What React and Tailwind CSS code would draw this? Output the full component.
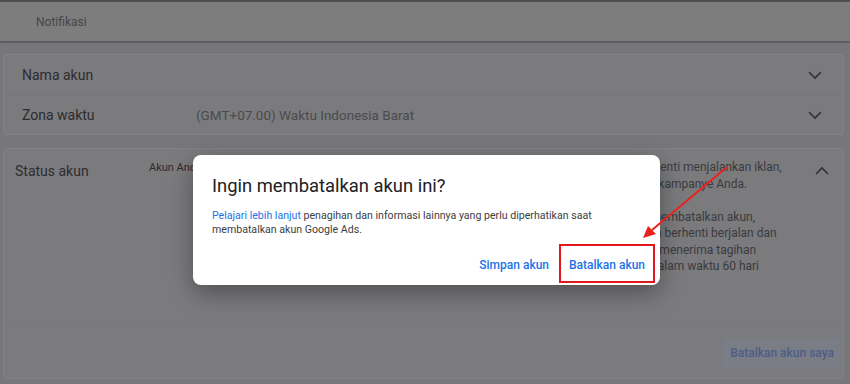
import { useState } from "react";

function Chevron({ up = false }) {
  return (
    <svg width="14" height="9" viewBox="0 0 14 9" className="shrink-0">
      <polyline
        points={up ? "1,8 7,2 13,8" : "1,1 7,7 13,1"}
        fill="none"
        stroke="#333336"
        strokeWidth="1.6"
      />
    </svg>
  );
}

const rightLines = [
  "Anda akan berhenti menjalankan iklan,",
  "termasuk iklan kampanye Anda.",
  "",
  "Setelah Anda membatalkan akun,",
  "iklan Anda akan berhenti berjalan dan",
  "dan Anda akan menerima tagihan",
  "terakhir Anda dalam waktu 60 hari",
];

export default function App() {
  const [open] = useState(true);

  return (
    <div className="relative h-[384px] w-[850px] overflow-hidden bg-[#77777a] font-['Roboto',sans-serif]">
      {/* top tab bar */}
      <div className="flex h-[43px] items-center border-t-2 border-b-2 border-t-[#4f4f50] border-b-[#5e5e60] bg-[#7d7d7e] pl-[36px]">
        <span className="text-[12px] text-[#464648]">Notifikasi</span>
      </div>

      {/* account name / time zone */}
      <div className="mt-[11px] ml-[3px] mr-[6px] rounded-[3px] border border-[#828285] bg-[#7b7b7e]">
        <div className="flex h-[40px] items-center pl-[18px] pr-[21px]">
          <span className="text-[14px] text-[#2c2c2f]">Nama akun</span>
          <span className="flex-1" />
          <Chevron />
        </div>
        <div className="flex h-[39px] items-center border-t border-[#77777a] pl-[18px] pr-[21px]">
          <span className="w-[174px] text-[14px] text-[#2c2c2f]">Zona waktu</span>
          <span className="text-[13.5px] text-[#4a4a4d]">
            (GMT+07.00) Waktu Indonesia Barat
          </span>
          <span className="flex-1" />
          <Chevron />
        </div>
      </div>

      {/* status card */}
      <div className="mt-[13px] ml-[3px] mr-[6px] rounded-[3px] border border-[#828285] bg-[#7b7b7e]">
        <div className="flex h-[174px]">
          <div className="w-[145px] pl-[11px] pt-[12px] text-[14px] text-[#2c2c2f]">
            Status akun
          </div>
          <div className="w-[428px] pt-[11px] text-[11px] text-[#2c2c2f]">
            Akun Anda aktif
          </div>
          <div className="w-[215px] whitespace-nowrap pt-[10px] text-[12px] leading-[16.5px] text-[#3a3a3d]">
            {rightLines.map((l, i) => (
              <div key={i} className="h-[16.5px]">
                {l}
              </div>
            ))}
          </div>
          <div className="flex flex-1 justify-end pr-[14px] pt-[17px]">
            <Chevron up />
          </div>
        </div>
        <div className="flex h-[55px] items-start justify-end border-t border-[#77777a] pt-[14px] pr-[1px]">
          <button className="h-[30px] rounded-[4px] bg-[#7a7d86] px-[8px] text-[12px] font-medium text-[#4c5d86]">
            Batalkan akun saya
          </button>
        </div>
      </div>

      {/* dialog */}
      {open && (
        <div className="absolute inset-0 flex justify-center pt-[155px] pl-[3px]">
          <div className="h-[130px] w-[467px] rounded-[8px] bg-white shadow-[0_8px_24px_rgba(0,0,0,0.35)]">
            <h2 className="pl-[19px] pt-[19px] text-[18.4px] leading-[24px] font-normal text-[#202124]">
              Ingin membatalkan akun ini?
            </h2>
            <p className="mt-[11px] pl-[19px] pr-[40px] text-[10.6px] leading-[14px] text-[#3c4043]">
              <a className="text-[#1a73e8]">Pelajari lebih lanjut</a> penagihan dan
              informasi lainnya yang perlu diperhatikan saat membatalkan akun
              Google Ads.
            </p>
            <div className="mt-[9px] flex justify-end gap-[4px] pr-[7px]">
              <button className="h-[35px] px-[8px] pt-[3px] text-[12px] font-medium text-[#1a73e8]">
                Simpan akun
              </button>
              <button className="h-[35px] w-[92px] pt-[3px] text-[12px] font-medium text-[#1a73e8] outline-2 outline-[#e2171d] outline-solid">
                Batalkan akun
              </button>
            </div>
          </div>
        </div>
      )}

      {/* annotation arrow */}
      <svg
        className="pointer-events-none absolute inset-0"
        width="850"
        height="384"
        viewBox="0 0 850 384"
      >
        <line x1="727" y1="167" x2="652" y2="230" stroke="#e8231e" strokeWidth="2" />
        <polygon points="643,238 648,226 656,234" fill="#e8231e" />
      </svg>
    </div>
  );
}
